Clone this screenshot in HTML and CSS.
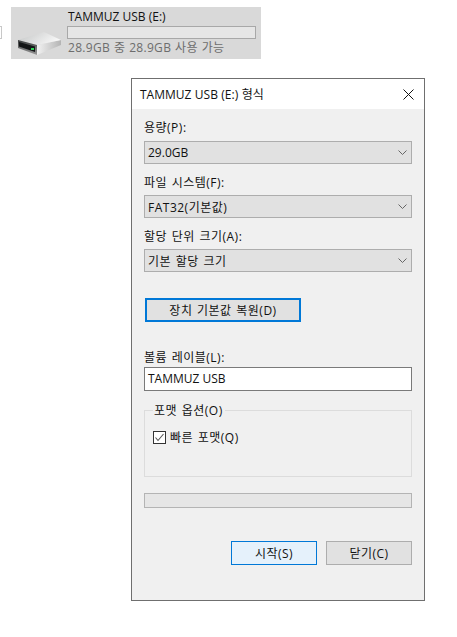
FILE: index.html
```html
<!DOCTYPE html>
<html>
    <head>
        <title>TAMMUZ USB (E:) 형식</title>
        <link rel="stylesheet" href="styles.css">
    </head>
    <body>
        <div class="topRow">
            <div class="edgeBox"></div>
            <div class="driveTile">
                <svg class="driveIcon" width="46" height="26" viewBox="0 0 46 26">
                    <defs>
                        <linearGradient id="driveTop" x1="0" y1="0" x2="1" y2="0.4">
                            <stop offset="0" stop-color="#c2c4c4"/>
                            <stop offset="1" stop-color="#f6f6f6"/>
                        </linearGradient>
                        <linearGradient id="driveSide" x1="0" y1="0" x2="1" y2="0">
                            <stop offset="0" stop-color="#f2f2f2"/>
                            <stop offset="1" stop-color="#b4b4b4"/>
                        </linearGradient>
                        <linearGradient id="driveFront" x1="0" y1="0" x2="0" y2="1">
                            <stop offset="0" stop-color="#3c3e3f"/>
                            <stop offset="1" stop-color="#9a9a9a"/>
                        </linearGradient>
                    </defs>
                    <path d="M20 14 L44 9 L44 14 L20 24 Z" fill="url(#driveSide)"/>
                    <path d="M1 9 L27 1 L44 9 L20 14 Z" fill="url(#driveTop)"/>
                    <path d="M1 9 L20 14 L20 24 L1 17 Z" fill="url(#driveFront)"/>
                    <path d="M2 11 L18 15.5 L18 21 L2 15.5 Z" fill="#141617"/>
                    <rect x="14" y="17" width="3" height="2" fill="#2fd457"/>
                </svg>
                <div class="driveInfo">
                    <div class="driveName">TAMMUZ USB (E:)</div>
                    <div class="driveBar"></div>
                    <div class="driveFree">28.9GB 중 28.9GB 사용 가능</div>
                </div>
            </div>
        </div>

        <div class="dialog">
            <div class="titleBar">
                <span class="titleText">TAMMUZ USB (E:) 형식</span>
                <svg class="closeIcon" width="11" height="11" viewBox="0 0 11 11">
                    <path d="M0.5 0.5 L10.5 10.5 M10.5 0.5 L0.5 10.5" stroke="#111" stroke-width="1" fill="none"/>
                </svg>
            </div>
            <div class="dialogBody">
                <label class="fieldLabel hangul">용량(P):</label>
                <div class="combo">
                    <span>29.0GB</span>
                    <svg class="chevron" width="9" height="5" viewBox="0 0 9 5"><path d="M0.5 0.5 L4.5 4.5 L8.5 0.5" stroke="#666" fill="none"/></svg>
                </div>
                <label class="fieldLabel hangul">파일 시스템(F):</label>
                <div class="combo">
                    <span class="hangul">FAT32(기본값)</span>
                    <svg class="chevron" width="9" height="5" viewBox="0 0 9 5"><path d="M0.5 0.5 L4.5 4.5 L8.5 0.5" stroke="#666" fill="none"/></svg>
                </div>
                <label class="fieldLabel hangul">할당 단위 크기(A):</label>
                <div class="combo">
                    <span class="hangul">기본 할당 크기</span>
                    <svg class="chevron" width="9" height="5" viewBox="0 0 9 5"><path d="M0.5 0.5 L4.5 4.5 L8.5 0.5" stroke="#666" fill="none"/></svg>
                </div>
                <button type="button" class="restoreButton hangul">장치 기본값 복원(D)</button>
                <label class="fieldLabel volumeLabel hangul">볼륨 레이블(L):</label>
                <div class="textBox">TAMMUZ USB</div>
                <div class="optionsBox">
                    <div class="optionsLegend hangul">포맷 옵션(O)</div>
                    <div class="checkRow">
                        <svg class="checkBox" width="13" height="13" viewBox="0 0 13 13">
                            <rect x="0.5" y="0.5" width="12" height="12" fill="#fff" stroke="#333"/>
                            <path d="M2.5 6.5 L5 9.5 L10.5 3" stroke="#555" stroke-width="1.1" fill="none"/>
                        </svg>
                        <span class="hangul">빠른 포맷(Q)</span>
                    </div>
                </div>
                <div class="progress"></div>
                <div class="buttonRow">
                    <button type="button" class="button startButton hangul">시작(S)</button>
                    <button type="button" class="button hangul">닫기(C)</button>
                </div>
            </div>
        </div>
    </body>
</html>
```

FILE: styles.css
```css
body {
    margin: 0;
    background-color: white;
    color: #111;
    font-family: "Open Sans", "Noto Sans CJK KR", sans-serif;
    font-size: 12px;
}

.hangul {
    letter-spacing: 0.5px;
    word-spacing: 1px;
}

.topRow {
    display: flex;
    height: 59px;
    padding-top: 7px;
    box-sizing: border-box;
}

.edgeBox {
    width: 2px;
    height: 13px;
    margin-top: 19px;
    box-sizing: border-box;
    border: 1px solid #c8c8c8;
    border-left: none;
}

.driveTile {
    display: flex;
    width: 250px;
    height: 52px;
    margin-left: 9px;
    background-color: #d9d9d9;
}

.driveIcon {
    margin: 24px 0 0 6px;
}

.driveInfo {
    width: 189px;
    margin-left: 4px;
}

.driveName {
    height: 19px;
    padding-left: 1px;
    line-height: 20px;
}

.driveBar {
    height: 13px;
    box-sizing: border-box;
    border: 1px solid #a8a8a8;
    background-color: #e6e6e6;
}

.driveFree {
    padding-left: 1px;
    color: #6d6d6d;
    line-height: 18px;
    letter-spacing: 0.3px;
    word-spacing: 0.5px;
}

.dialog {
    width: 294px;
    height: 523px;
    margin: 19px 0 0 131px;
    box-sizing: border-box;
    border: 1px solid #6f6f6f;
    background-color: #f0f0f0;
}

.titleBar {
    display: flex;
    justify-content: space-between;
    align-items: center;
    height: 30px;
    padding: 0 10px 0 8px;
    background-color: white;
}

.titleText {
    word-spacing: 0.3px;
}

.dialogBody {
    display: flex;
    flex-direction: column;
    padding: 0 12px;
}

.fieldLabel {
    height: 32px;
    line-height: 37px;
}

.combo {
    display: flex;
    justify-content: space-between;
    align-items: center;
    height: 23px;
    padding: 0 3px;
    box-sizing: border-box;
    border: 1px solid #adadad;
    background-color: #e1e1e1;
}

.chevron {
    margin-right: 1px;
}

.fieldLabel + .combo + .fieldLabel {
    height: 31px;
}

.restoreButton {
    width: 156px;
    height: 24px;
    margin: 26px 0 0 1px;
    padding: 0;
    border: 2px solid #0078d7;
    background-color: #e1e1e1;
    color: #111;
    font-family: inherit;
    font-size: 12px;
}

.volumeLabel {
    height: 45px;
    line-height: 71px;
}

.textBox {
    height: 24px;
    line-height: 22px;
    padding: 0 3px;
    box-sizing: border-box;
    border: 1px solid #7a7a7a;
    background-color: white;
}

.optionsBox {
    height: 67px;
    margin-top: 19px;
    padding: 0 9px 0 8px;
    box-sizing: border-box;
    border: 1px solid #dcdcdc;
}

.optionsLegend {
    width: fit-content;
    height: 16px;
    margin-top: -8px;
    padding: 0 2px 0 1px;
    line-height: 16px;
    background-color: #f0f0f0;
}

.checkRow {
    display: flex;
    align-items: center;
    gap: 4px;
    margin-top: 9px;
}

.progress {
    height: 15px;
    margin-top: 16px;
    box-sizing: border-box;
    border: 1px solid #b4b4b4;
    background-color: #e6e6e6;
}

.buttonRow {
    display: flex;
    justify-content: flex-end;
    gap: 9px;
    margin-top: 33px;
}

.button {
    width: 86px;
    height: 24px;
    padding: 0;
    border: 1px solid #adadad;
    background-color: #e1e1e1;
    color: #111;
    font-family: inherit;
    font-size: 12px;
}

.startButton {
    border-color: #0078d7;
    background-color: #e5f1fb;
}
```
